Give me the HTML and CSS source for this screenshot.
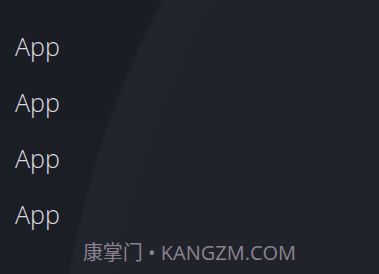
FILE: index.html
```html
<!DOCTYPE html>
<html lang="zh">
<head>
<meta charset="utf-8">
<title>App</title>
<link rel="stylesheet" href="styles.css">
</head>
<body>
<div class="screen">
  <ul class="app-list">
    <li class="app-item">App</li>
    <li class="app-item">App</li>
    <li class="app-item">App</li>
    <li class="app-item">App</li>
  </ul>
  <div class="watermark">康掌门 • KANGZM.COM</div>
</div>
</body>
</html>
```

FILE: styles.css
```css
html, body {
  margin: 0;
  padding: 0;
}

body {
  width: 379px;
  height: 274px;
  overflow: hidden;
  background-color: #1b1d24;
}

.screen {
  width: 379px;
  height: 274px;
  box-sizing: border-box;
  padding-top: 18px;
  display: flex;
  flex-direction: column;
  background:
    radial-gradient(circle 918px at 973px 428px, #1f212a 0, #21232b 860px, #23252d 914px, rgba(27,29,36,0) 918.5px),
    linear-gradient(180deg, #1b1d24 0%, #1c1e25 100%);
}

.app-list {
  list-style: none;
  margin: 0;
  padding: 0 0 0 15px;
  display: flex;
  flex-direction: column;
}

.app-item {
  height: 56px;
  line-height: 56px;
  font-family: "Open Sans", "Liberation Sans", sans-serif;
  font-weight: 300;
  font-size: 25px;
  color: #dcdce0;
}

.watermark {
  height: 24px;
  line-height: 24px;
  margin-top: -1px;
  text-align: center;
  font-family: "Open Sans", "Noto Sans CJK SC", sans-serif;
  font-size: 20px;
  color: #8a8291;
  white-space: nowrap;
}
```
